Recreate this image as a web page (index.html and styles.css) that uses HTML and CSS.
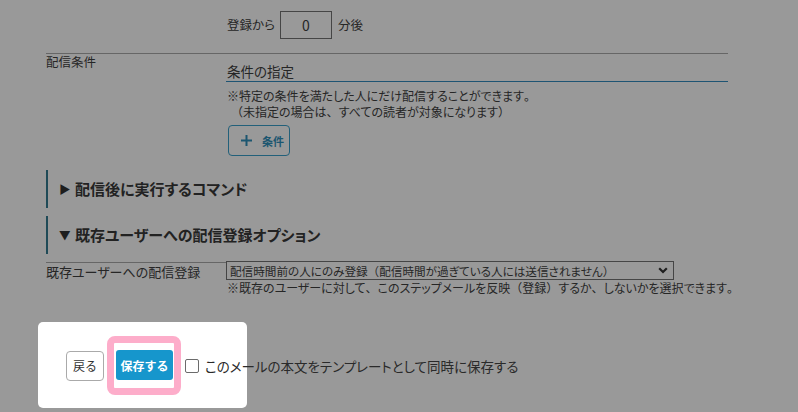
FILE: index.html
```html
<!DOCTYPE html>
<html lang="ja">
<head>
<meta charset="utf-8">
<link rel="stylesheet" href="styles.css">
</head>
<body>
<div class="page">
  <div class="grid delay-row">
    <div class="label"></div>
    <div class="delay">
      <span>登録から</span>
      <span class="num-input">0</span>
      <span>分後</span>
    </div>
  </div>

  <div class="grid cond-row">
    <div class="label small">配信条件</div>
    <div class="cond">
      <div class="cond-title">条件の指定</div>
      <div class="note">※特定の条件を満たした人にだけ配信することができます<span class="fw">。</span></div>
      <div class="note indent"><span class="fw">（</span>未指定の場合は<span class="fw">、</span>すべての読者が対象になります<span class="fw">）</span></div>
      <button class="add-btn" type="button">
        <svg width="13" height="13" viewBox="0 0 13 13"><path d="M6.5 1v11M1 6.5h11" stroke="currentColor" stroke-width="2" fill="none"/></svg>
        <span>条件</span>
      </button>
    </div>
  </div>

  <div class="section first"><span class="tri">▶</span>配信後に実行するコマンド</div>
  <div class="section"><span class="tri">▼</span>既存ユーザーへの配信登録オプション</div>

  <div class="grid opt-row">
    <div class="label lined">既存ユーザーへの配信登録</div>
    <div class="opt">
      <div class="select">
        <span>配信時間前の人にのみ登録<span class="fw">（</span>配信時間が過ぎている人には送信されません<span class="fw">）</span></span>
        <svg class="chev" width="10" height="7" viewBox="0 0 10 7"><path d="M1.2 1.2L5 5l3.8-3.8" stroke="currentColor" stroke-width="2.2" fill="none"/></svg>
      </div>
      <div class="note">※既存のユーザーに対して<span class="fw">、</span>このステップメールを反映<span class="fw">（</span>登録<span class="fw">）</span>するか<span class="fw">、</span>しないかを選択できます<span class="fw">。</span></div>
    </div>
  </div>
</div>

<div class="footer">
  <button class="back-btn" type="button">戻る</button>
  <div class="ring"><button class="save-btn" type="button">保存する</button></div>
  <label class="tpl"><span class="box"></span><span class="tpl-text">このメールの本文をテンプレートとして同時に保存する</span></label>
</div>
</body>
</html>
```

FILE: styles.css
```css
* { box-sizing: border-box; }
html, body { margin: 0; padding: 0; }
body {
  background: #999999;
  color: #262626;
  font-family: "Noto Sans CJK JP", "Noto Sans", sans-serif;
  font-size: 13px;
  font-feature-settings: "palt";
  width: 798px;
  height: 412px;
  overflow: hidden;
}
.fw { font-feature-settings: normal; }
.page {
  margin-left: 46px;
  width: 682px;
}
.grid {
  display: grid;
  grid-template-columns: 180px 1fr;
}
.delay-row { height: 53px; }
.delay {
  display: flex;
  align-items: center;
  padding-top: 11px;
  padding-left: 1px;
  height: 38px;
  font-size: 12.5px;
}
.num-input {
  flex-shrink: 0;
  width: 52px;
  height: 28px;
  border: 1px solid #454545;
  margin: 0 6px 0 5px;
  display: flex;
  align-items: center;
  justify-content: center;
  font-size: 14px;
}
.cond-row {
  border-top: 1px solid #666;
}
.label {
  line-height: 16px;
}
.label.small { font-size: 12.5px; }
.cond-title {
  font-size: 13.5px;
  line-height: 20px;
  padding-top: 7px;
  padding-left: 1px;
  height: 28px;
  border-bottom: 1px solid #1e5473;
}
.note {
  font-size: 12px;
  line-height: 16px;
  padding-left: 1px;
  white-space: nowrap;
}
.note.indent { padding-left: 5px; }
.cond-title + .note { margin-top: 6px; }
.add-btn {
  margin: 5px 0 0 2px;
  width: 62px;
  height: 31px;
  border: 1.5px solid #22607a;
  border-radius: 4px;
  background: transparent;
  color: #1c5670;
  display: flex;
  align-items: center;
  gap: 9px;
  padding: 0 0 0 11px;
  font-family: inherit;
  font-size: 11px;
  font-weight: 700;
}
.section {
  margin-top: 8px;
  height: 38px;
  line-height: 38px;
  border-left: 2px solid #1f4a57;
  padding-left: 11px;
  font-size: 15px;
  font-weight: 700;
  color: #222;
}
.tri {
  display: inline-block;
  font-size: 11.5px;
  width: 16px;
  color: #1e1e1e;
  vertical-align: top;
}
.section.first { margin-top: 14px; }
.opt-row { margin-top: 8px; }
.lined {
  border-top: 1px solid #666;
  padding-top: 1px;
}
.select {
  width: 448px;
  height: 19px;
  border: 1px solid #454545;
  display: flex;
  align-items: center;
  justify-content: space-between;
  padding: 0 5px 0 3px;
  line-height: 16px;
  font-size: 11.6px;
  white-space: nowrap;
  margin-top: -1px;
}
.chev { color: #1f1f1f; flex-shrink: 0; }
.footer {
  margin: 26px 0 0 38px;
  width: 209px;
  height: 86px;
  background: #fff;
  border-radius: 5px;
  display: flex;
  align-items: center;
  padding: 1px 0 0 28px;
  white-space: nowrap;
}
.footer > * { flex-shrink: 0; }
.back-btn {
  width: 38px;
  height: 30px;
  border: 1px solid #aaa;
  border-radius: 4px;
  background: #fff;
  color: #333;
  font-family: inherit;
  font-size: 12px;
  padding: 0;
}
.ring {
  margin-left: 3px;
  width: 74px;
  height: 59px;
  border: 7px solid #fdadca;
  border-radius: 8px;
  padding: 7px 1px 7px 2px;
  background: #fff;
}
.save-btn {
  display: block;
  width: 57px;
  height: 30px;
  border: none;
  border-radius: 3px;
  background: #1696cc;
  color: #fff;
  font-family: inherit;
  font-size: 12px;
  font-weight: 700;
  padding: 0;
}
.tpl {
  display: flex;
  align-items: center;
  margin-left: 4px;
}
.box {
  width: 14px;
  height: 14px;
  border: 1px solid #6b6b6b;
  border-radius: 2px;
  background: #fff;
}
.tpl-text {
  margin-left: 6px;
  font-size: 13.5px;
  color: #2a2a2a;
}
```
